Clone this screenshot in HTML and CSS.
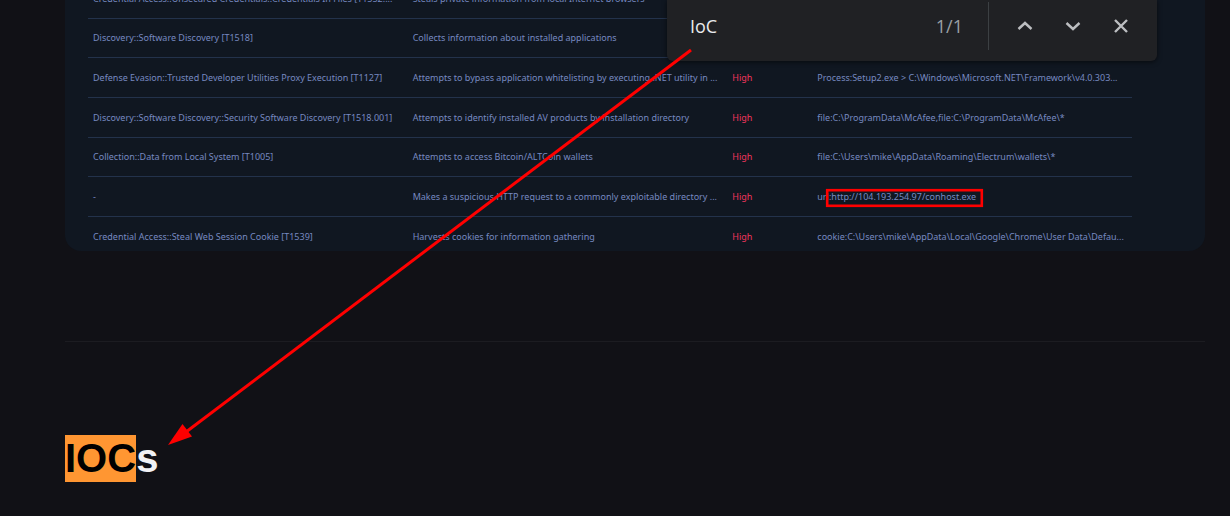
FILE: index.html
```html
<!DOCTYPE html>
<html lang="en">
<head>
<meta charset="utf-8">
<title>IOCs</title>
<link rel="stylesheet" href="styles.css">
</head>
<body>
<main class="page">
  <section class="card">
    <table class="signatures">
      <colgroup><col class="col-wide"><col class="col-wide"><col class="col-level"><col class="col-wide"></colgroup>
      <tbody>
        <tr><td>Credential Access::Unsecured Credentials::Credentials In Files [T1552....</td><td>Steals private information from local Internet browsers</td><td class="level"></td><td></td></tr>
        <tr><td>Discovery::Software Discovery [T1518]</td><td>Collects information about installed applications</td><td class="level"></td><td></td></tr>
        <tr><td>Defense Evasion::Trusted Developer Utilities Proxy Execution [T1127]</td><td>Attempts to bypass application whitelisting by executing .NET utility in ...</td><td class="level">High</td><td>Process:Setup2.exe &gt; C:\Windows\Microsoft.NET\Framework\v4.0.303...</td></tr>
        <tr><td>Discovery::Software Discovery::Security Software Discovery [T1518.001]</td><td>Attempts to identify installed AV products by installation directory</td><td class="level">High</td><td>file:C:\ProgramData\McAfee,file:C:\ProgramData\McAfee\*</td></tr>
        <tr><td>Collection::Data from Local System [T1005]</td><td>Attempts to access Bitcoin/ALTCoin wallets</td><td class="level">High</td><td>file:C:\Users\mike\AppData\Roaming\Electrum\wallets\*</td></tr>
        <tr><td>-</td><td>Makes a suspicious HTTP request to a commonly exploitable directory ...</td><td class="level">High</td><td>url:http://104.193.254.97/conhost.exe</td></tr>
        <tr><td>Credential Access::Steal Web Session Cookie [T1539]</td><td>Harvests cookies for information gathering</td><td class="level">High</td><td>cookie:C:\Users\mike\AppData\Local\Google\Chrome\User Data\Defau...</td></tr>
      </tbody>
    </table>
  </section>
  <hr class="divider">
  <h1 class="heading"><mark class="match">IOC</mark>s</h1>
</main>

<form class="find" role="search">
  <input class="find-input" type="text" value="IoC" aria-label="Find in page">
  <output class="find-count">1/1</output>
  <div class="find-actions">
    <button class="find-button" type="button" aria-label="Previous"><svg width="16" height="16" viewBox="0 0 16 16"><path d="M1.500 11 8 5l6.500 6"/></svg></button>
    <button class="find-button" type="button" aria-label="Next"><svg width="16" height="16" viewBox="0 0 16 16"><path d="M1.500 5 8 11l6.500-6"/></svg></button>
    <button class="find-button" type="button" aria-label="Close"><svg width="16" height="16" viewBox="0 0 16 16"><path d="m2 2 12 12M14 2 2 14"/></svg></button>
  </div>
</form>

<svg class="annotations" width="1230" height="516" viewBox="0 0 1230 516" aria-hidden="true">
  <rect x="827.2" y="190.2" width="154.6" height="15.6" fill="none" stroke="#f00" stroke-width="2.6"/>
  <path d="M691 50 186 432" stroke="#f00" stroke-width="3"/>
  <path d="M168 445l14.500-21 9.500 12.500z" fill="#f00"/>
</svg>
</body>
</html>
```
FILE: styles.css
```css
* { box-sizing: border-box; }

body {
  margin: 0;
  background: #111116;
  color: #f2f2f4;
  font-family: "Open Sans", "Noto Sans", sans-serif;
  overflow: hidden;
}

.page {
  display: flow-root;
  padding: 0 25px 0 65px;
}

.card {
  margin-top: -21px;
  padding: 0 73px 0 23px;
  background: #101721;
  border-radius: 0 0 16px 16px;
}

.signatures {
  width: 100%;
  table-layout: fixed;
  border-collapse: separate;
  border-spacing: 0;
  color: #7789c0;
  font-family: "Noto Sans", "Open Sans", sans-serif;
  font-size: 9px;
  line-height: 14px;
}

.col-level { width: 85px; }

.signatures td {
  height: 40px;
  padding: 0 5px;
  border-bottom: 1px solid #23324b;
  white-space: nowrap;
  vertical-align: middle;
}

.signatures tr:nth-child(3n + 2) td { height: 39px; }

.signatures tr:last-child td {
  height: 34px;
  padding-top: 6px;
  border-bottom: 0;
}

.signatures .level { color: #f0355c; }

.divider {
  height: 1px;
  margin: 90px 0 0;
  border: 0;
  background: #1c1c21;
}

.heading {
  margin: 93px 0 0;
  font: 700 40px/47px "Liberation Sans", Arial, sans-serif;
}

.match {
  display: inline-block;
  background: #ff9632;
  color: #000;
}

.find {
  position: absolute;
  top: 0;
  right: 73px;
  display: flex;
  align-items: center;
  width: 490px;
  height: 61px;
  padding: 0 12px 9px 23px;
  border-radius: 0 0 6px 6px;
  background: #202124;
  box-shadow: 0 1px 5px rgb(0 0 0 / 60%);
}

.find-input {
  flex: 1;
  min-width: 0;
  padding: 0;
  border: 0;
  outline: 0;
  background: none;
  color: #e8eaed;
  font: 18px/24px "Open Sans", "Noto Sans", sans-serif;
}

.find-count {
  margin-right: 25px;
  color: #9aa0a6;
  font-size: 18px;
  line-height: 24px;
}

.find-actions {
  display: flex;
  align-items: center;
  height: 48px;
  padding-left: 12px;
  border-left: 1px solid #3c4043;
}

.find-button {
  display: grid;
  place-items: center;
  width: 48px;
  height: 48px;
  padding: 0;
  border: 0;
  background: none;
}

.find-button svg {
  fill: none;
  stroke: #bcbec1;
  stroke-width: 2.4;
}

.annotations {
  position: absolute;
  top: 0;
  left: 0;
  pointer-events: none;
}
```
